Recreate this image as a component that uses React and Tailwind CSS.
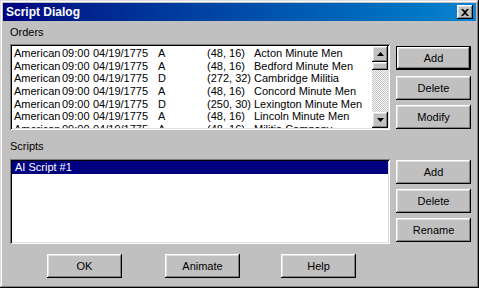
import React from 'react';

const raised =
  'shadow-[inset_-1px_-1px_#000,inset_1px_1px_#fff,inset_-2px_-2px_#808080,inset_2px_2px_#dfdfdf]';
const sunken =
  'shadow-[inset_1px_1px_#808080,inset_-1px_-1px_#fff,inset_2px_2px_#000,inset_-2px_-2px_#dfdfdf]';

const orders = [
  ['A', '(48, 16)', 'Acton Minute Men'],
  ['A', '(48, 16)', 'Bedford Minute Men'],
  ['D', '(272, 32)', 'Cambridge Militia'],
  ['A', '(48, 16)', 'Concord Minute Men'],
  ['D', '(250, 30)', 'Lexington Minute Men'],
  ['A', '(48, 16)', 'Lincoln Minute Men'],
  ['A', '(48, 16)', 'Militia Company'],
];

const Button = ({ children, isDefault, className = '' }) => (
  <button
    className={`w-[75px] h-[24px] bg-[#c0c0c0] text-black text-[11px] leading-none flex items-center justify-center ${
      isDefault ? 'border border-black' : ''
    } ${className}`}
  >
    <span className={`w-full h-full flex items-center justify-center ${raised}`}>{children}</span>
  </button>
);

const Arrow = ({ up }) => (
  <div className={`w-[16px] h-[16px] bg-[#c0c0c0] flex items-center justify-center ${raised}`}>
    <svg width="7" height="4" viewBox="0 0 7 4">
      {up ? <polygon points="3.5,0 7,4 0,4" fill="#000" /> : <polygon points="0,0 7,0 3.5,4" fill="#000" />}
    </svg>
  </div>
);

export default function App() {
  return (
    <div
      className="w-[479px] h-[288px] bg-[#c0c0c0] p-[3px] text-black shadow-[inset_-1px_-1px_#000,inset_1px_1px_#dfdfdf,inset_-2px_-2px_#808080,inset_2px_2px_#fff] overflow-hidden"
      style={{ fontFamily: '"Liberation Sans", Arial, sans-serif' }}
    >
      {/* Title bar */}
      <div className="h-[18px] bg-gradient-to-r from-[#000080] to-[#1084d0] flex items-center justify-between pl-[3px] pr-[3px]">
        <span className="text-white font-bold text-[12px] leading-none">Script Dialog</span>
        <div className={`w-[16px] h-[14px] bg-[#c0c0c0] flex items-center justify-center ${raised}`}>
          <svg width="8" height="7" viewBox="0 0 8 7">
            <path d="M0 0h2l2 2 2-2h2L5 3.5 8 7H6L4 5 2 7H0l3-3.5z" fill="#000" />
          </svg>
        </div>
      </div>

      <div className="pl-[7px] pt-[5px]">
        {/* Orders */}
        <div className="flex">
          <div className="w-[380px] flex flex-col">
            <div className="h-[13px] text-[11px] leading-[13px]">Orders</div>
            <div className={`mt-[5px] h-[86px] bg-white flex p-[2px] ${sunken}`}>
              <div className="flex-1 overflow-hidden pt-[1px] pl-[2px] text-[11px]">
                {orders.map(([c, pos, name], i) => (
                  <div key={i} className="h-[12.7px] leading-[13px] flex whitespace-nowrap">
                    <span className="w-[48px]">American</span>
                    <span className="w-[31px]">09:00</span>
                    <span className="w-[65px]">04/19/1775</span>
                    <span className="w-[49px]">{c}</span>
                    <span className="w-[47px]">{pos}</span>
                    <span>{name}</span>
                  </div>
                ))}
              </div>
              <div className="w-[16px] flex flex-col">
                <Arrow up />
                <div className="flex-1 flex flex-col bg-[repeating-conic-gradient(#fff_0%_25%,#c0c0c0_0%_50%)] bg-[length:2px_2px]">
                  <div className={`h-[8px] bg-[#c0c0c0] ${raised}`} />
                </div>
                <Arrow />
              </div>
            </div>
          </div>
          <div className="ml-[6px] mt-[20px] flex flex-col">
            <Button isDefault>Add</Button>
            <Button className="mt-[6px]">Delete</Button>
            <Button className="mt-[5px]">Modify</Button>
          </div>
        </div>

        {/* Scripts */}
        <div className="flex mt-[10px]">
          <div className="w-[380px] flex flex-col">
            <div className="h-[13px] text-[11px] leading-[13px]">Scripts</div>
            <div className={`mt-[6px] h-[85px] bg-white p-[2px] ${sunken}`}>
              <div className="h-[13px] bg-[#000080] text-white text-[11px] leading-[13px] pl-[3px]">
                AI Script #1
              </div>
            </div>
          </div>
          <div className="ml-[6px] mt-[20px] flex flex-col gap-[5px]">
            <Button>Add</Button>
            <Button>Delete</Button>
            <Button>Rename</Button>
          </div>
        </div>

        {/* Bottom buttons */}
        <div className="flex mt-[10px] pl-[37px]">
          <Button>OK</Button>
          <Button className="ml-[43px]">Animate</Button>
          <Button className="ml-[41px]">Help</Button>
        </div>
      </div>
    </div>
  );
}
